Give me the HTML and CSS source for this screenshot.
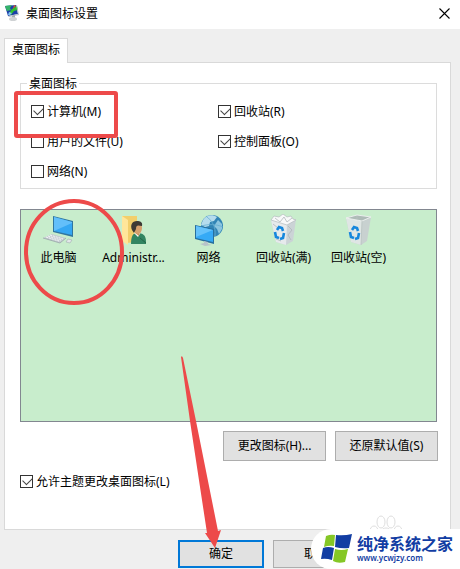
FILE: index.html
```html
<!DOCTYPE html>
<html lang="zh-CN">
<head>
    <meta charset="UTF-8">
    <meta name="viewport" content="width=device-width, initial-scale=1.0">
    <title>桌面图标设置</title>
    <link rel="stylesheet" href="styles.css">
</head>
<body>

    <!-- Title bar -->
    <header class="title-bar">
        <svg class="title-icon" width="16" height="16" viewBox="0 0 16 16">
            <path d="M1 1l11-1 2 9-10 2z" fill="#1c3fa8"/>
            <path d="M1 1l7-1-2 3 1 2-4 1-1-2z" fill="#35b36a"/>
            <path d="M8 4l5-3 1 4-4 1-3 4-2-2z" fill="#2fc02f"/>
            <path d="M5 7l3 1-2 2H4z" fill="#7fc4f5"/>
            <path d="M10 0l2 1-3 3z" fill="#d8572c"/>
            <path d="M12 0l1 0 2 10-10 2-1-1 10-2z" fill="#b8bfc6"/>
            <path d="M8 11l3-1v3H8z" fill="#a5abb0"/>
            <ellipse cx="9" cy="14" rx="4" ry="2" fill="#cfd2d4"/>
        </svg>
        <h1 class="title">桌面图标设置</h1>
        <button class="close" type="button" aria-label="关闭">
            <svg width="11" height="11" viewBox="0 0 11 11">
                <path d="M0.5 0.5l10 10M10.5 0.5l-10 10" stroke="#000" stroke-width="1.1"/>
            </svg>
        </button>
    </header>

    <main class="dialog">
        <div class="tabs">
            <button class="tab" type="button">桌面图标</button>
        </div>

        <section class="panel">
            <fieldset class="group">
                <legend>桌面图标</legend>
                <div class="options">
                    <label class="check"><input type="checkbox" checked>计算机(M)</label>
                    <label class="check"><input type="checkbox" checked>回收站(R)</label>
                    <label class="check"><input type="checkbox">用户的文件(U)</label>
                    <label class="check"><input type="checkbox" checked>控制面板(O)</label>
                    <label class="check"><input type="checkbox">网络(N)</label>
                </div>
            </fieldset>

            <!-- Icon list -->
            <ul class="icon-list">
                <li class="icon-item">
                    <svg width="32" height="32" viewBox="0 0 32 32">
                        <path d="M10 2l20 5v16l-20-5z" fill="#31769f"/>
                        <path d="M11 3l18 5v13l-18-4z" fill="#35a7f3"/>
                        <path d="M11 3l18 5v1l-18 8z" fill="#63bffa"/>
                        <path d="M9 20l14 4-6 5L0 24z" fill="#c5cdd2"/>
                        <path d="M7 21l13 4M5 22l13 4M3 23l13 4" stroke="#fff" stroke-width="0.8" stroke-dasharray="2 1"/>
                        <path d="M0 24l17 5 6-5" fill="none" stroke="#929da4" stroke-width="0.7"/>
                        <path d="M25 25l4 1-2 3-4-1z" fill="#e2e7e9" stroke="#a3acb1" stroke-width="0.6"/>
                    </svg>
                    <span>此电脑</span>
                </li>
                <li class="icon-item">
                    <svg width="32" height="32" viewBox="0 0 32 32">
                        <path d="M4 2h15v26l-11 1-4-3z" fill="#f2cf6b"/>
                        <path d="M4 2l6 4v25l-6-4z" fill="#ffe69a"/>
                        <path d="M13 30c0-8 2-11 6-11 6 0 9 2 9 9v2z" fill="#328561"/>
                        <path d="M16 19l4 4 3-5-3-2z" fill="#fff"/>
                        <path d="M17 17h5l-1 5-4-3z" fill="#c88d59"/>
                        <ellipse cx="20" cy="14" rx="4" ry="6" fill="#d6a16e"/>
                        <path d="M14 16c-2-5 0-9 5-9 3 0 6 1 5 5-3 0-6-2-6 3l-2 4z" fill="#3d3a35"/>
                        <path d="M22 24l6 5" stroke="#236546"/>
                    </svg>
                    <span>Administr...</span>
                </li>
                <li class="icon-item">
                    <svg width="32" height="32" viewBox="0 0 32 32">
                        <circle cx="19" cy="12" r="11" fill="#3184b5"/>
                        <path d="M10 6c3-5 9-6 14-3l-3 4-4 1-1 4-4 1-4-2z" fill="#b5dced"/>
                        <path d="M25 6l4 4v5l-3 5-2-5-3-3z" fill="#8bc5df"/>
                        <path d="M13 2c6 5 10 10 9 20M8 12c8-2 15-2 22 1" fill="none" stroke="#65add0" stroke-width="0.8"/>
                        <path d="M2 11l19 4v15l-19-5z" fill="#276f9e"/>
                        <path d="M3 12l17 4v12l-17-4z" fill="#35aaf6"/>
                        <path d="M3 12l17 4-17 7z" fill="#65c2fb"/>
                        <path d="M11 27l4 1v2l4 1-7 1-5-2 4-1z" fill="#b8c4c9"/>
                    </svg>
                    <span>网络</span>
                </li>
                <li class="icon-item">
                    <svg width="32" height="32" viewBox="0 0 32 32">
                        <path d="M3 6l25-1-3 22-7 4-10-3z" fill="#cbd3d6"/>
                        <path d="M3 6l16 4-1 21-10-3z" fill="#e6eaec"/>
                        <path d="M3 6l3-4 5 1 4-3 4 3 4-1 2 3 3 1-9 5z" fill="#f8f9f9" stroke="#b4bcbf" stroke-width="0.7"/>
                        <path d="M7 4l5 4 4-5 3 5 5-4M20 12l4 4-4 5 3 5M5 10l5 4M8 25l5 2" fill="none" stroke="#b0b8bb" stroke-width="0.8"/>
                        <path d="M9 16l2-3 3 1 1 3M7 18l1 5 3 1M16 19l-1 5-3 1" fill="none" stroke="#1687dc" stroke-width="2.6"/>
                    </svg>
                    <span>回收站(满)</span>
                </li>
                <li class="icon-item">
                    <svg width="32" height="32" viewBox="0 0 32 32">
                        <path d="M3 4l11-3 14 2-4 24-6 4-10-3z" fill="#c8d1d0"/>
                        <path d="M3 4l16 3-1 24-10-3z" fill="#dfe6e4"/>
                        <path d="M3 4l11-3 14 2-9 4z" fill="#aebbb7" stroke="#eef2f1" stroke-width="0.9"/>
                        <path d="M19 7l-1 24M14 2v3" fill="none" stroke="#b7c1bf" stroke-width="0.8"/>
                        <path d="M9 16l2-3 3 1 1 3M7 18l1 5 3 1M16 19l-1 5-3 1" fill="none" stroke="#1687dc" stroke-width="2.6"/>
                    </svg>
                    <span>回收站(空)</span>
                </li>
            </ul>

            <div class="actions">
                <button class="btn" type="button">更改图标(H)...</button>
                <button class="btn" type="button">还原默认值(S)</button>
            </div>

            <label class="check"><input type="checkbox" checked>允许主题更改桌面图标(L)</label>
        </section>

        <footer class="footer">
            <button class="btn btn-default" type="button">确定</button>
            <button class="btn" type="button">取消</button>
        </footer>
    </main>

    <!-- Red marks drawn over the dialog -->
    <svg class="marks" width="230" height="560" viewBox="0 0 230 560">
        <rect x="16" y="93" width="100" height="43" rx="1" fill="none" stroke="#ed4a4a" stroke-width="4"/>
        <ellipse cx="74" cy="252" rx="48" ry="51" fill="none" stroke="#ed4a4a" stroke-width="4"/>
        <path d="M181 357q1-2 2 1L196 421 218 531l3-1-6 18-10-15 2 0L190 421z" fill="#ed4a4a"/>
    </svg>

    <!-- Faint paw behind the badge -->
    <svg class="paw" width="100" height="34" viewBox="0 0 100 34" fill="none" stroke="#dedede">
        <ellipse cx="43" cy="8" rx="4" ry="6"/>
        <ellipse cx="53" cy="8" rx="4" ry="6"/>
        <ellipse cx="36" cy="17" rx="4" ry="5"/>
        <ellipse cx="60" cy="17" rx="4" ry="5"/>
        <path d="M48 14c-5 0-6 6-10 9-3 4 0 9 10 9s13-5 10-9c-4-3-5-9-10-9z"/>
    </svg>

    <!-- Site badge -->
    <div class="badge">
        <svg width="32" height="31" viewBox="0 0 32 31">
            <path d="M5 3q5-2 9-1l-1 11q-5-1-10 1z" fill="#85c726"/>
            <path d="M15 2q8 1 16-1l-3 14q-7 1-14-1z" fill="#123da3"/>
            <path d="M2 15q5-2 11 0l-2 12q-6-2-11-1z" fill="#123da3"/>
            <path d="M14 16q6 2 13 0l-3 13q-7 2-12-1z" fill="#85c726"/>
        </svg>
        <div class="badge-text">
            <strong>纯净系统之家</strong>
            <span>www.ycwjzy.com</span>
        </div>
    </div>

</body>
</html>
```
FILE: styles.css
```css
/* Global Reset */
* {
    margin: 0;
    padding: 0;
    box-sizing: border-box;
}

body {
    position: relative;
    min-height: 100vh;
    overflow: hidden;
    background: #efefef;
    color: #000;
    font: 12px/15px "Noto Sans", "Noto Sans CJK SC", sans-serif;
}

button {
    font: inherit;
    color: inherit;
}

/* Title bar */
.title-bar {
    display: flex;
    align-items: center;
    height: 29px;
    padding: 0 10px 3px 4px;
    background: #fff;
}

.title {
    flex: 1;
    margin-left: 6px;
    font-size: 12px;
    font-weight: normal;
}

.close {
    display: flex;
    border: none;
    background: none;
}

/* Tab and panel */
.dialog {
    padding: 9px 9px 0 4px;
}

.tabs {
    display: flex;
}

.tab {
    height: 25px;
    margin-bottom: -1px;
    padding: 0 7px 3px;
    border: 1px solid #d9d9d9;
    border-bottom: none;
    background: #fff;
    z-index: 1;
}

.panel {
    padding: 13px 13px 40px 15px;
    border: 1px solid #d9d9d9;
    background: #fff;
}

.group {
    padding: 13px 10px 9px;
    border: 1px solid #dcdcdc;
}

.group legend {
    margin-left: -4px;
    padding: 0 2px;
}

.options {
    display: grid;
    grid-template-columns: 187px 1fr;
    row-gap: 15px;
}

.check {
    display: flex;
    align-items: center;
    gap: 3px;
}

.check input {
    appearance: none;
    position: relative;
    width: 13px;
    height: 13px;
    border: 1px solid #333;
    background: #fff;
}

.check input:checked::after {
    content: "";
    position: absolute;
    left: 2px;
    top: 1px;
    width: 8px;
    height: 5px;
    border: solid #444;
    border-width: 0 0 1px 1px;
    transform: rotate(-45deg);
}

/* Icon list */
.icon-list {
    display: flex;
    height: 213px;
    margin-top: 20px;
    padding-top: 4px;
    border: 1px solid #828790;
    background: #c8edcc;
    list-style: none;
}

.icon-item {
    display: flex;
    flex-direction: column;
    align-items: center;
    gap: 4px;
    width: 75px;
}

/* Buttons */
.btn {
    height: 30px;
    padding-bottom: 2px;
    border: 1px solid #adadad;
    background: #e1e1e1;
}

.actions {
    display: flex;
    justify-content: flex-end;
    gap: 9px;
    margin: 9px -1px 13px 0;
}

.actions .btn {
    width: 103px;
}

.footer {
    display: flex;
    justify-content: flex-end;
    gap: 9px;
    margin-top: 10px;
    padding-right: 92px;
}

.footer .btn {
    width: 86px;
    height: 28px;
}

.footer .btn-default {
    border: 2px solid #0078d7;
}

/* Overlays */
.marks {
    position: absolute;
    left: 0;
    top: 0;
    pointer-events: none;
}

.paw {
    position: absolute;
    right: 22px;
    bottom: 21px;
    pointer-events: none;
}

.badge {
    position: absolute;
    right: 0;
    bottom: 0;
    display: flex;
    align-items: center;
    gap: 4px;
    height: 40px;
    padding: 0 7px 2px 10px;
    border-radius: 20px 0 0 20px;
    background: #fff;
    color: #123da3;
}

.badge-text {
    display: flex;
    flex-direction: column;
}

.badge strong {
    font-size: 16px;
    line-height: 20px;
}

.badge span {
    font-size: 8px;
    line-height: 8px;
    font-weight: 600;
}
```
